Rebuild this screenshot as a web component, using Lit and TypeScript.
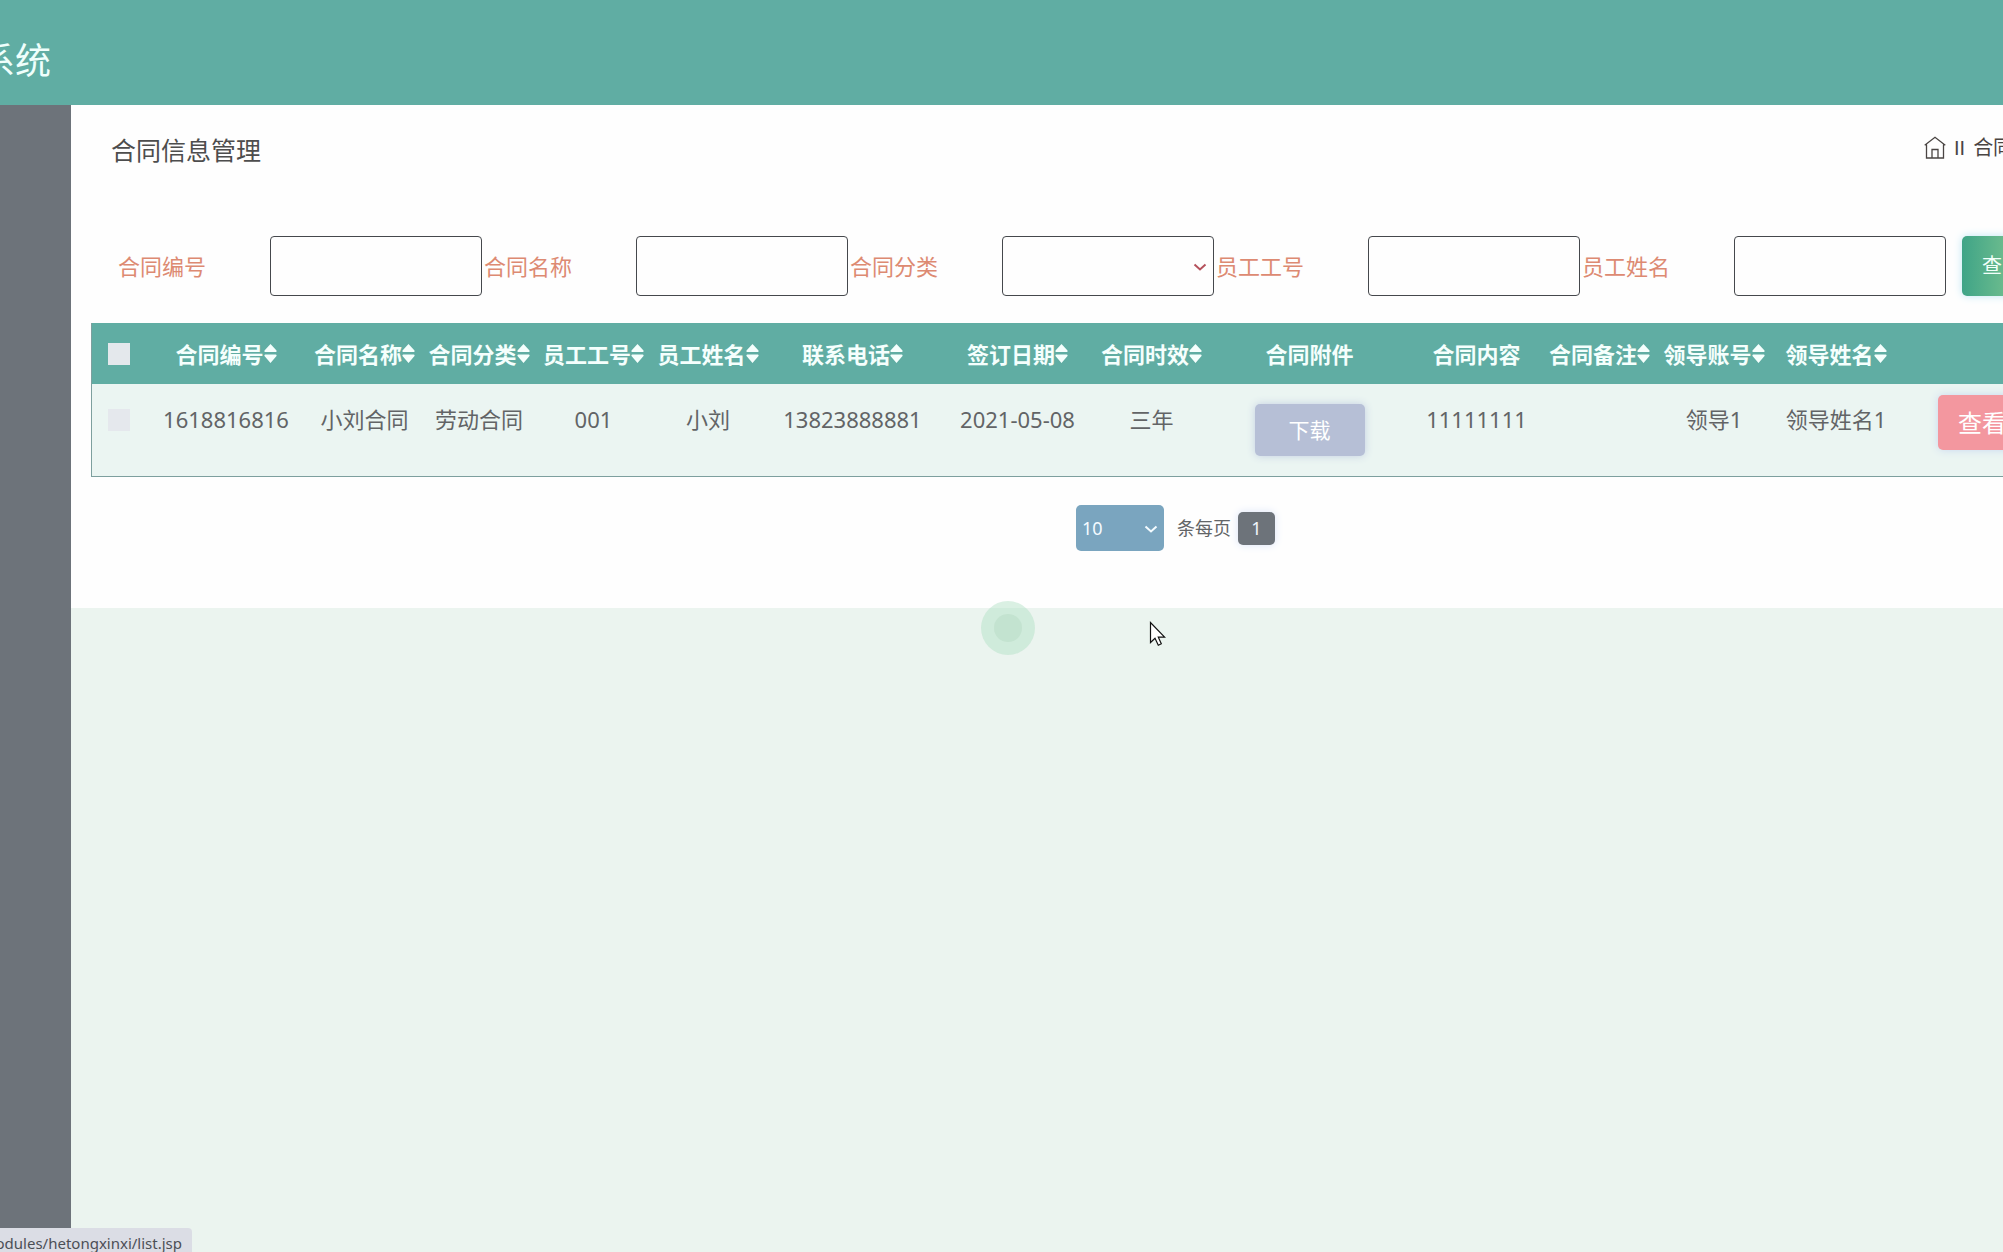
import { LitElement, html, css, svg, nothing } from "lit";
import { customElement } from "lit/decorators.js";

interface Column {
  title: string;
  width: number;
  sortable: boolean;
}

const columns: Column[] = [
  { title: "合同编号", width: 162, sortable: true },
  { title: "合同名称", width: 115, sortable: true },
  { title: "合同分类", width: 114, sortable: true },
  { title: "员工工号", width: 115, sortable: true },
  { title: "员工姓名", width: 114, sortable: true },
  { title: "联系电话", width: 175, sortable: true },
  { title: "签订日期", width: 155, sortable: true },
  { title: "合同时效", width: 113, sortable: true },
  { title: "合同附件", width: 203, sortable: false },
  { title: "合同内容", width: 131, sortable: false },
  { title: "合同备注", width: 115, sortable: true },
  { title: "领导账号", width: 114, sortable: true },
  { title: "领导姓名", width: 130, sortable: true },
];

const filters = [
  { id: "no", label: "合同编号", kind: "text" },
  { id: "name", label: "合同名称", kind: "text" },
  { id: "type", label: "合同分类", kind: "select" },
  { id: "staffNo", label: "员工工号", kind: "text" },
  { id: "staffName", label: "员工姓名", kind: "text" },
];

const rows = [
  ["1618816816", "小刘合同", "劳动合同", "001", "小刘", "13823888881", "2021-05-08", "三年", null, "11111111", "", "领导1", "领导姓名1"],
];

const chevron = svg`<path d="M1.5 1.5 L7 6.5 L12.5 1.5" fill="none" stroke="currentColor" stroke-width="2" />`;

@customElement("app-root")
export class AppRoot extends LitElement {
  static styles = css`
    :host {
      display: flex;
      flex-direction: column;
      min-height: 100vh;
      overflow: hidden;
      position: relative;
      background: #ebf4ef;
      color: #626466;
      font-family: "Noto Sans", "Noto Sans CJK SC", sans-serif;
      font-size: 22px;
      line-height: 32px;
    }
    * {
      box-sizing: border-box;
    }
    button,
    input,
    select {
      font: inherit;
      color: inherit;
      margin: 0;
    }
    .top {
      height: 105px;
      background: #60ada3;
      display: flex;
      align-items: center;
      padding-top: 17px;
    }
    .brand {
      width: 51px;
      display: flex;
      justify-content: flex-end;
      white-space: nowrap;
      margin: 0;
      color: #effffc;
      font-size: 36px;
      font-weight: 400;
      line-height: 48px;
    }
    .body {
      flex: 1;
      display: flex;
      align-items: stretch;
    }
    .side {
      flex: none;
      width: 71px;
      background: #6d737a;
    }
    .main {
      flex: none;
      width: calc(100% + 206px);
    }
    .card {
      background: #fefefe;
      padding: 25px 20px 57px;
    }
    .heading {
      display: flex;
      justify-content: space-between;
      padding-left: 20px;
      line-height: 40px;
    }
    .title {
      margin: 0;
      font-size: 25px;
      font-weight: 400;
      color: #4d4d4d;
    }
    .crumbs {
      width: 336px;
      display: flex;
      align-items: center;
      gap: 8px;
      font-family: "Liberation Sans", "Noto Sans CJK SC", sans-serif;
      font-size: 20px;
      line-height: 36px;
      height: 36px;
      color: #4a4543;
      white-space: nowrap;
    }
    .crumbs a {
      display: flex;
      color: inherit;
    }
    .search {
      display: flex;
      align-items: center;
      padding-left: 27px;
      margin-top: 66px;
    }
    .field {
      flex: none;
      display: flex;
      align-items: center;
      margin-right: 2px;
      position: relative;
      color: #dd8a72;
    }
    .field label {
      width: 152px;
    }
    .box {
      width: 212px;
      height: 60px;
      border: 1px solid #45484c;
      border-radius: 4px;
      background: #fefefe;
      padding: 0 12px;
      appearance: none;
      outline: none;
    }
    .field .arrow {
      position: absolute;
      right: 7px;
      top: 27px;
      color: #b5525c;
      pointer-events: none;
    }
    .query {
      flex: none;
      height: 60px;
      margin-left: 14px;
      padding: 0 20px;
      border: 0;
      border-radius: 5px;
      color: #f2fffa;
      font-size: 20px;
      background: linear-gradient(90deg, #3fa487, #7cc490);
      box-shadow: 0 0 8px #bfe6f4;
    }
    table {
      width: 100%;
      margin-top: 27px;
      table-layout: fixed;
      border-collapse: separate;
      border-spacing: 0;
      border: solid #7d9f9e;
      border-width: 0 1px 1px;
      background: #ebf5f2;
    }
    th,
    td {
      padding: 19px 0 20px;
      text-align: center;
      vertical-align: top;
      white-space: nowrap;
      font-weight: 400;
    }
    th {
      height: 61px;
      padding: 0;
      vertical-align: middle;
      background: #60ada3;
      color: #f5fffd;
      font-weight: 700;
    }
    .sort {
      display: inline-flex;
      align-items: center;
      padding: 0;
      border: 0;
      background: none;
      font-weight: 700;
    }
    .pick {
      display: block;
      width: 22px;
      height: 22px;
      margin: 0 auto;
      appearance: none;
      background: #e4e8ec;
    }
    td .pick {
      margin-top: 6px;
      background: #e5e8ed;
    }
    .download,
    .view {
      display: block;
      border: 0;
      border-radius: 5px;
      color: #fff;
    }
    .download {
      width: 110px;
      height: 52px;
      margin: 1px auto 0;
      font-size: 21px;
      background: #b6bfd6;
      box-shadow: 0 0 8px #c3cfe2;
    }
    td.actions {
      padding: 11px 0 0 37px;
    }
    .view {
      height: 55px;
      padding: 0 20px;
      font-size: 24px;
      background: #f3979f;
      box-shadow: 0 0 8px #c9d8ef;
    }
    .pager {
      display: flex;
      justify-content: center;
      align-items: center;
      margin-top: 28px;
      font-size: 18px;
    }
    .size {
      position: relative;
      display: flex;
      align-items: center;
      gap: 13px;
    }
    .size select {
      width: 88px;
      height: 46px;
      padding: 0 6px;
      border: 0;
      border-radius: 5px;
      appearance: none;
      color: #f4fbff;
      background: #7aa5bf;
    }
    .size .arrow {
      position: absolute;
      left: 68px;
      top: 20px;
      color: #f4fbff;
      pointer-events: none;
    }
    .page {
      width: 37px;
      height: 33px;
      margin-left: 7px;
      padding: 0;
      border: 0;
      border-radius: 5px;
      color: #f2f5fa;
      background: #6d737a;
      box-shadow: 0 0 8px #dbe4f8;
    }
    .ripple {
      position: absolute;
      left: 981px;
      top: 601px;
    }
    .cursor {
      position: absolute;
      left: 1149px;
      top: 621px;
    }
    .status {
      position: absolute;
      left: 0;
      bottom: 0;
      width: 192px;
      height: 24px;
      padding-right: 10px;
      display: flex;
      justify-content: flex-end;
      overflow: hidden;
      border-top-right-radius: 4px;
      background: #dbdde5;
      color: #4c4f56;
      font-size: 15px;
      line-height: 30px;
      white-space: nowrap;
    }
  `;

  private renderFilter(f: (typeof filters)[number]) {
    return html`<div class="field">
      <label for=${f.id}>${f.label}</label>
      ${f.kind === "select"
        ? html`<select class="box" id=${f.id}><option></option></select>
            <svg class="arrow" width="14" height="8" viewBox="0 0 14 8" aria-hidden="true">${chevron}</svg>`
        : html`<input class="box" type="text" id=${f.id} />`}
    </div>`;
  }

  private renderHead(c: Column) {
    return html`<th scope="col">
      ${c.sortable
        ? html`<button class="sort" type="button">
            ${c.title}<svg width="13" height="19" viewBox="0 0 13 19" fill="currentColor" aria-hidden="true">
              <path d="M6.5 0 L12.5 6.5 Q13 8 11.8 8 H1.2 Q0 8 0.5 6.5 Z M1.2 10.5 H11.8 Q13 10.5 12.5 12 L6.5 19 L0.5 12 Q0 10.5 1.2 10.5 Z" />
            </svg>
          </button>`
        : c.title}
    </th>`;
  }

  render() {
    return html`
      <header class="top"><h1 class="brand">系统</h1></header>
      <div class="body">
        <nav class="side"></nav>
        <main class="main">
          <section class="card">
            <div class="heading">
              <h2 class="title">合同信息管理</h2>
              <div class="crumbs">
                <a href="#" aria-label="首页">
                  <svg width="22" height="24" viewBox="0 0 22 24" fill="none" stroke="currentColor" stroke-width="1.3">
                    <path d="M0.7 9.2 L11 1.2 L21.3 9.2 M2.5 8.5 V22 H19.5 V8.5 M8 22 V13.5 H14 V22" />
                  </svg>
                </a>
                <span>II</span><span>合同</span>
              </div>
            </div>
            <form class="search" @submit=${(e: Event) => e.preventDefault()}>
              ${filters.map((f) => this.renderFilter(f))}
              <button class="query" type="submit">查</button>
            </form>
            <table>
              <colgroup>
                <col style="width:53px" />
                ${columns.map((c) => html`<col style="width:${c.width}px" />`)}
                <col />
              </colgroup>
              <thead>
                <tr>
                  <th><input class="pick" type="checkbox" aria-label="全选" /></th>
                  ${columns.map((c) => this.renderHead(c))}
                  <th></th>
                </tr>
              </thead>
              <tbody>
                ${rows.map(
                  (r) => html`<tr>
                    <td><input class="pick" type="checkbox" aria-label=${r[0]} /></td>
                    ${r.map((v) => html`<td>${v === null ? html`<button class="download" type="button">下载</button>` : v || nothing}</td>`)}
                    <td class="actions"><button class="view" type="button">查看</button></td>
                  </tr>`
                )}
              </tbody>
            </table>
            <div class="pager">
              <div class="size">
                <select id="size"><option>10</option></select>
                <svg class="arrow" width="14" height="8" viewBox="0 0 14 8" aria-hidden="true">${chevron}</svg>
                <label for="size">条每页</label>
              </div>
              <button class="page" type="button">1</button>
            </div>
          </section>
        </main>
      </div>
      <svg class="ripple" width="54" height="54" viewBox="0 0 54 54" aria-hidden="true">
        <circle cx="27" cy="27" r="27" fill="#a9debf" fill-opacity="0.42" />
        <circle cx="27" cy="27" r="14" fill="#a9d0b6" fill-opacity="0.3" />
      </svg>
      <svg class="cursor" width="17" height="26" viewBox="0 0 17 26" aria-hidden="true">
        <path d="M1.5 1.5 V21.5 L6 17.3 L9.3 24.2 L12.3 22.8 L9.3 16.2 H15.6 Z" fill="#fff" stroke="#111" stroke-width="1.2" />
      </svg>
      <div class="status">odules/hetongxinxi/list.jsp</div>
    `;
  }
}
